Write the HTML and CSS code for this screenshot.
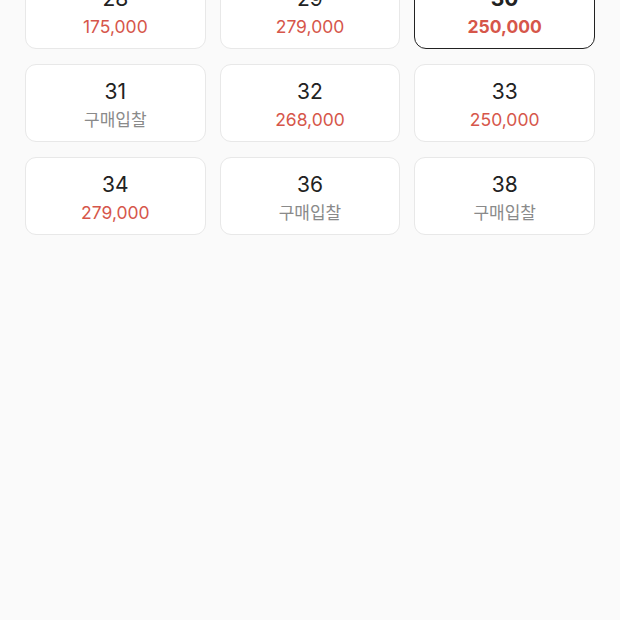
FILE: index.html
```html
<!DOCTYPE html>
<html lang="ko">
<head>
  <meta charset="UTF-8">
  <meta name="viewport" content="width=device-width, initial-scale=1.0">
  <title>사이즈 선택</title>
  <link rel="stylesheet" href="styles.css">
</head>
<body>
  <section class="sizeList">
    <button type="button" class="size"><span class="num">28</span><span class="price">175,000</span></button>
    <button type="button" class="size"><span class="num">29</span><span class="price">279,000</span></button>
    <button type="button" class="size selected"><span class="num">30</span><span class="price">250,000</span></button>

    <button type="button" class="size"><span class="num">31</span><span class="bid">구매입찰</span></button>
    <button type="button" class="size"><span class="num">32</span><span class="price">268,000</span></button>
    <button type="button" class="size"><span class="num">33</span><span class="price">250,000</span></button>

    <button type="button" class="size"><span class="num">34</span><span class="price">279,000</span></button>
    <button type="button" class="size"><span class="num">36</span><span class="bid">구매입찰</span></button>
    <button type="button" class="size"><span class="num">38</span><span class="bid">구매입찰</span></button>
  </section>
</body>
</html>
```

FILE: styles.css
```css
html, body{
  margin: 0;
  height: 100%;
  background: #fafafa;
  font-family: Inter, "Noto Sans CJK KR", sans-serif;
}

/* list is scrolled a little, first row sits under the top edge */
.sizeList{
  display: grid;
  grid-template-columns: repeat(3, 1fr);
  gap: 15px 14px;
  padding: 0 25px;
  margin-top: -29px;
}

.size{
  display: flex;
  flex-direction: column;
  align-items: center;
  box-sizing: border-box;
  height: 78px;
  padding: 13px 0 0;
  background: #fff;
  border: 1px solid #e8e8e8;
  border-radius: 11px;
  font-family: inherit;
  cursor: pointer;
}
.size.selected{
  border: 1.6px solid #222;
  border-radius: 12px;
  font-weight: 700;
}

.num{
  font-size: 21px;
  line-height: 27px;
  color: #222;
}
.price{
  margin-top: 3px;
  font-size: 17.5px;
  line-height: 24px;
  color: #d6564a;
}
.bid{
  margin-top: 3px;
  font-size: 17px;
  line-height: 24px;
  color: #8a8a8a;
}
```
